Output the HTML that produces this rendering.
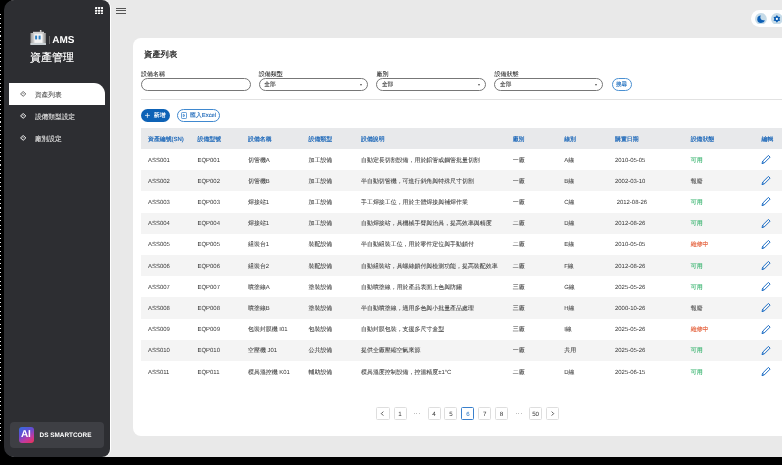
<!DOCTYPE html>
<html><head><meta charset="utf-8">
<style>
*{box-sizing:border-box;margin:0;padding:0}
html,body{width:782px;height:465px;overflow:hidden;background:#000;font-family:"Liberation Sans",sans-serif}
.abs{position:absolute}
#app{position:absolute;left:100px;top:0;width:700px;height:457px;background:#e9e9e9}
#side{position:absolute;left:4px;top:0;width:106px;height:457px;background:#2d2e32;border-radius:10px 8px 8px 10px;box-shadow:1px 0 0 #fff}
.grid{position:absolute;left:95px;top:7px;width:8px;height:8px;display:grid;grid-template-columns:repeat(3,2px);grid-template-rows:repeat(3,2px);gap:1px}
.grid i{background:#fff;display:block}
.ham{position:absolute;left:116px;width:10px;height:1px;background:#555}
#card{position:absolute;left:133px;top:38px;width:700px;height:398px;background:#fff;border-radius:8px}
.t{position:absolute;white-space:nowrap;line-height:1}
.lbl{font-size:6px;color:#2a2a2a;-webkit-text-stroke:0.08px #2a2a2a}
.inp{position:absolute;top:78.2px;height:12.6px;border:1px solid #777;border-radius:7px;background:#fff}
.inp .v{position:absolute;left:4.7px;top:3.8px;font-size:5.7px;color:#333;line-height:1;-webkit-text-stroke:0.1px #333}
.inp .arr{position:absolute;right:5px;top:4.5px;width:0;height:0;border-left:1.5px solid transparent;border-right:1.5px solid transparent;border-top:2px solid #555}
.hdr{position:absolute;left:141px;width:700px;height:21px;background:#e8e9eb}
.alt{position:absolute;left:141px;width:700px;height:21.2px;background:#f4f4f4}
.th{font-size:5.9px;color:#1a66b8;-webkit-text-stroke:0.2px #1a66b8}
.td{font-size:5.95px;color:#333}
.td .c{color:#3a3a3a;-webkit-text-stroke:0.06px #3a3a3a}
.pg{position:absolute;top:406.5px;width:13.2px;height:13.3px;border:1px solid #dedede;border-radius:1.5px;background:#fff;font-size:6.2px;color:#333;text-align:center;line-height:13.2px}
.pg .ch{position:absolute;left:-1px;top:-1px}
.menu{position:absolute;font-size:6.7px;color:#e2e2e2;line-height:1;-webkit-text-stroke:0.1px currentColor}
.dia{position:absolute;width:4.5px;height:4.5px;border:1px solid #fff;transform:rotate(45deg)}
.dia::after{content:"";position:absolute;left:0.75px;top:0.75px;width:1px;height:1px;background:#fff}

svg{display:block}
#root{position:absolute;left:0;top:0;width:782px;height:465px;will-change:transform;overflow:hidden;text-rendering:geometricPrecision}

</style></head><body><div id="root">
<div id="ldots" class="abs" style="left:0;top:14px;width:1px;height:430px;background:repeating-linear-gradient(to bottom,#ddd 0,#ddd 1px,transparent 1px,transparent 4.3px)"></div>
<div id="app"></div>
<div id="side"></div>
<div class="abs" style="left:94.8px;top:6.9px;width:8.2px;height:7.6px"><svg width="8.2" height="7.6" viewBox="0 0 8.2 7.6" fill="#fff"><rect x="0" y="0" width="2.2" height="2" rx="0.4"/><rect x="3" y="0" width="2.2" height="2" rx="0.4"/><rect x="6" y="0" width="2.2" height="2" rx="0.4"/><rect x="0" y="2.8" width="2.2" height="2" rx="0.4"/><rect x="3" y="2.8" width="2.2" height="2" rx="0.4"/><rect x="6" y="2.8" width="2.2" height="2" rx="0.4"/><rect x="0" y="5.6" width="2.2" height="2" rx="0.4"/><rect x="3" y="5.6" width="2.2" height="2" rx="0.4"/><rect x="6" y="5.6" width="2.2" height="2" rx="0.4"/></svg></div>
<div class="ham" style="top:8px"></div><div class="ham" style="top:10.4px"></div><div class="ham" style="top:12.9px"></div>

<!-- brand -->
<div class="abs" style="left:29.5px;top:30px;width:16px;height:16px">
<svg width="16" height="16" viewBox="0 0 16 16"><defs><linearGradient id="rb" x1="0" y1="0" x2="1" y2="0"><stop offset="0" stop-color="#9a9a9a"/><stop offset="0.25" stop-color="#d8d8d8"/><stop offset="0.75" stop-color="#d8d8d8"/><stop offset="1" stop-color="#8a8a8a"/></linearGradient></defs>
<circle cx="10.7" cy="0.9" r="0.9" fill="#e0e0e0"/><rect x="3" y="1.8" width="11" height="1.4" fill="#cfcfcf"/><rect x="0.5" y="3" width="15.4" height="12" fill="url(#rb)"/><rect x="4.5" y="4.2" width="7.9" height="8.6" fill="#f5f5f5"/><rect x="5.1" y="5.6" width="2" height="3.8" fill="#2f7fc0"/><rect x="8.6" y="5.6" width="2" height="3.8" fill="#2f7fc0"/><rect x="0.5" y="13" width="15.4" height="2" fill="#c9d0d4"/></svg></div>
<div class="abs" style="left:49px;top:36px;width:1px;height:8px;background:#666"></div>
<div class="t" style="left:52.3px;top:36px;font-size:10px;font-weight:bold;color:#fff">AMS</div>
<div class="t" style="left:30px;top:52.6px;font-size:11px;color:#fff;-webkit-text-stroke:0.2px #fff">資產管理</div>

<!-- menu -->
<div class="abs" style="left:9px;top:83px;width:96px;height:22px;background:#fff;border-radius:0 11px 0 0"></div>
<div class="abs" style="left:19.8px;top:90.8px;width:6.4px;height:5.8px"><svg width="6.4" height="5.8" viewBox="0 0 12 11" fill="none" stroke="#444" stroke-width="1.5"><path d="M6 1L11 5.5L6 10L1 5.5Z"/><path d="M4.6 5.1H7.4" stroke-width="1.1"/></svg></div>
<div class="menu" style="left:34.9px;top:93px;color:#555">資產列表</div>
<div class="abs" style="left:19.8px;top:112.8px;width:6.4px;height:5.8px"><svg width="6.4" height="5.8" viewBox="0 0 12 11" fill="none" stroke="#fff" stroke-width="1.8"><path d="M6 1L11 5.5L6 10L1 5.5Z"/><path d="M4.6 5.1H7.4" stroke-width="1.1"/></svg></div>
<div class="menu" style="left:34.9px;top:114.9px">設備類型設定</div>
<div class="abs" style="left:19.8px;top:135.2px;width:6.4px;height:5.8px"><svg width="6.4" height="5.8" viewBox="0 0 12 11" fill="none" stroke="#fff" stroke-width="1.8"><path d="M6 1L11 5.5L6 10L1 5.5Z"/><path d="M4.6 5.1H7.4" stroke-width="1.1"/></svg></div>
<div class="menu" style="left:34.9px;top:137px">廠別設定</div>

<!-- bottom brand -->
<div class="abs" style="left:10px;top:422px;width:93.5px;height:26px;background:#3e3f44;border-radius:4px"></div>
<div class="abs" style="left:18.7px;top:427.3px;width:15.3px;height:15.3px;border-radius:3px;background:linear-gradient(150deg,#2f6ee0 0%,#6a4ad0 40%,#c23aa0 70%,#f0304f 100%)"></div>
<div class="t" style="left:21px;top:430.3px;font-size:10px;font-weight:bold;color:#fff;letter-spacing:-0.3px">AI</div>
<div class="t" style="left:39.6px;top:433px;font-size:6.4px;font-weight:bold;color:#fff">DS SMARTCORE</div>

<!-- theme pill -->
<div class="abs" style="left:751.4px;top:10.1px;width:60px;height:17.3px;background:#fff;border-radius:9px"></div>
<div class="abs" style="left:755.2px;top:12.7px;width:11.8px;height:11.8px"><svg width="11.8" height="11.8" viewBox="0 0 24 24"><defs><mask id="mm"><rect width="24" height="24" fill="#fff"/><circle cx="17.2" cy="8.6" r="6.2" fill="#000"/></mask></defs><circle cx="12" cy="12" r="12" fill="#c6dbe8"/><circle cx="12.2" cy="12.6" r="7.6" fill="#0d5fb5" mask="url(#mm)"/></svg></div>
<div class="abs" style="left:770.9px;top:12.7px;width:11.8px;height:11.8px"><svg width="11.8" height="11.8" viewBox="0 0 24 24"><circle cx="12" cy="12" r="12" fill="#c6dbe8"/><path d="M12 4.3L14.6 7.5L18.7 8.1L17.2 12L18.7 15.9L14.6 16.5L12 19.7L9.4 16.5L5.3 15.9L6.8 12L5.3 8.1L9.4 7.5Z" fill="#0d5fb5"/><circle cx="12" cy="12" r="4.6" fill="#0d5fb5"/><circle cx="12" cy="12" r="2.2" fill="#fff"/></svg></div>

<div id="card"></div>
<div class="t" style="left:144px;top:50px;font-size:8.3px;color:#222;-webkit-text-stroke:0.25px #222">資產列表</div>

<div class="t lbl" style="left:141px;top:72.4px">設備名稱</div>
<div class="inp" style="left:141px;width:110px"></div>
<div class="t lbl" style="left:258.7px;top:72.4px">設備類型</div>
<div class="inp" style="left:258.6px;width:109.6px"><span class="v">全部</span><span class="arr"></span></div>
<div class="t lbl" style="left:376.4px;top:72.4px">廠別</div>
<div class="inp" style="left:376.2px;width:110px"><span class="v">全部</span><span class="arr"></span></div>
<div class="t lbl" style="left:494.4px;top:72.4px">設備狀態</div>
<div class="inp" style="left:494.3px;width:109.2px"><span class="v">全部</span><span class="arr"></span></div>
<div class="abs" style="left:611.8px;top:78.2px;width:20.5px;height:12.5px;border:1px solid #4a90d2;border-radius:6.5px"></div>
<div class="t" style="left:616px;top:83px;font-size:5.5px;color:#1f6fbf;-webkit-text-stroke:0.15px #1f6fbf">搜尋</div>
<div class="abs" style="left:141px;top:99px;width:700px;height:1px;background:#e2e2e2"></div>

<!-- buttons -->
<div class="abs" style="left:140.8px;top:109.2px;width:28.8px;height:13px;background:#0d62b6;border-radius:7px"></div>
<div class="abs" style="left:145.2px;top:113.1px;width:4.8px;height:4.8px"><svg width="4.8" height="4.8" viewBox="0 0 10 10"><path d="M5 0v10M0 5h10" stroke="#fff" stroke-width="1.5"/></svg></div>
<div class="t" style="left:153.8px;top:113.8px;font-size:5.9px;color:#fff;-webkit-text-stroke:0.12px #fff">新增</div>
<div class="abs" style="left:177px;top:109.2px;width:43px;height:13px;border:1px solid #3f88cf;border-radius:7px"></div>
<div class="abs" style="left:180.8px;top:112.3px;width:6px;height:7px"><svg width="6" height="7" viewBox="0 0 12 14" fill="none" stroke="#2a78c8" stroke-width="1.4"><rect x="1" y="1" width="10" height="12" rx="1.5"/><path d="M4.5 4.5L8 7L4.5 9.5Z"/></svg></div>
<div class="t" style="left:190px;top:114.2px;font-size:5.9px;color:#1a66b8;-webkit-text-stroke:0.1px #1a66b8">匯入Excel</div>

<div class="hdr" style="top:127.8px"></div>
<div class="t th" style="left:148px;top:138.10px">資產編號(SN)</div>
<div class="t th" style="left:197.5px;top:138.10px">設備型號</div>
<div class="t th" style="left:248px;top:138.10px">設備名稱</div>
<div class="t th" style="left:308.5px;top:138.10px">設備類型</div>
<div class="t th" style="left:361px;top:138.10px">設備說明</div>
<div class="t th" style="left:512.7px;top:138.10px">廠別</div>
<div class="t th" style="left:564.2px;top:138.10px">線別</div>
<div class="t th" style="left:615px;top:138.10px">購置日期</div>
<div class="t th" style="left:690.7px;top:138.10px">設備狀態</div>
<div class="t th" style="left:761.6px;top:138.10px">編輯</div>
<div class="t td" style="left:148px;top:158.60px">ASS001</div>
<div class="t td" style="left:197.5px;top:158.60px">EQP001</div>
<div class="t td" style="left:248px;top:158.60px"><span class="c">切管機</span>A</div>
<div class="t td" style="left:308.5px;top:158.60px"><span class="c">加工設備</span></div>
<div class="t td" style="left:361px;top:158.60px"><span class="c">自動定長切割設備，用於鋁管或鋼管批量切割</span></div>
<div class="t td" style="left:512.7px;top:158.60px"><span class="c">一廠</span></div>
<div class="t td" style="left:564.2px;top:158.60px">A<span class="c">線</span></div>
<div class="t td" style="left:615px;top:158.60px">2010-05-05</div>
<div class="t td" style="left:690.7px;top:158.60px;color:#2fb068;-webkit-text-stroke:0.12px #2fb068">可用</div>
<div class="abs" style="left:756px;top:150.00px;width:20px;height:20px"><svg width="20" height="20" viewBox="0 0 20 20" fill="none" stroke="#1f6fc6" stroke-width="1" stroke-linejoin="round"><path d="M6 13.7L6.6 11.2L12.4 5.4L14.1 7.1L8.3 12.9Z"/><path d="M6.6 11.2L8.3 12.9"/></svg></div>
<div class="alt" style="top:170.20px"></div>
<div class="t td" style="left:148px;top:179.80px">ASS002</div>
<div class="t td" style="left:197.5px;top:179.80px">EQP002</div>
<div class="t td" style="left:248px;top:179.80px"><span class="c">切管機</span>B</div>
<div class="t td" style="left:308.5px;top:179.80px"><span class="c">加工設備</span></div>
<div class="t td" style="left:361px;top:179.80px"><span class="c">半自動切管機，可進行斜角與特殊尺寸切割</span></div>
<div class="t td" style="left:512.7px;top:179.80px"><span class="c">一廠</span></div>
<div class="t td" style="left:564.2px;top:179.80px">B<span class="c">線</span></div>
<div class="t td" style="left:615px;top:179.80px">2002-03-10</div>
<div class="t td" style="left:690.7px;top:179.80px;color:#555;-webkit-text-stroke:0.12px #555">報廢</div>
<div class="abs" style="left:756px;top:171.20px;width:20px;height:20px"><svg width="20" height="20" viewBox="0 0 20 20" fill="none" stroke="#1f6fc6" stroke-width="1" stroke-linejoin="round"><path d="M6 13.7L6.6 11.2L12.4 5.4L14.1 7.1L8.3 12.9Z"/><path d="M6.6 11.2L8.3 12.9"/></svg></div>
<div class="t td" style="left:148px;top:201.00px">ASS003</div>
<div class="t td" style="left:197.5px;top:201.00px">EQP003</div>
<div class="t td" style="left:248px;top:201.00px"><span class="c">焊接站</span>1</div>
<div class="t td" style="left:308.5px;top:201.00px"><span class="c">加工設備</span></div>
<div class="t td" style="left:361px;top:201.00px"><span class="c">手工焊接工位，用於主體焊接與補焊作業</span></div>
<div class="t td" style="left:512.7px;top:201.00px"><span class="c">一廠</span></div>
<div class="t td" style="left:564.2px;top:201.00px">C<span class="c">線</span></div>
<div class="t td" style="left:615px;top:201.00px">&nbsp;2012-08-26</div>
<div class="t td" style="left:690.7px;top:201.00px;color:#2fb068;-webkit-text-stroke:0.12px #2fb068">可用</div>
<div class="abs" style="left:756px;top:192.40px;width:20px;height:20px"><svg width="20" height="20" viewBox="0 0 20 20" fill="none" stroke="#1f6fc6" stroke-width="1" stroke-linejoin="round"><path d="M6 13.7L6.6 11.2L12.4 5.4L14.1 7.1L8.3 12.9Z"/><path d="M6.6 11.2L8.3 12.9"/></svg></div>
<div class="alt" style="top:212.60px"></div>
<div class="t td" style="left:148px;top:222.20px">ASS004</div>
<div class="t td" style="left:197.5px;top:222.20px">EQP004</div>
<div class="t td" style="left:248px;top:222.20px"><span class="c">焊接站</span>1</div>
<div class="t td" style="left:308.5px;top:222.20px"><span class="c">加工設備</span></div>
<div class="t td" style="left:361px;top:222.20px"><span class="c">自動焊接站，具機械手臂與治具，提高效率與精度</span></div>
<div class="t td" style="left:512.7px;top:222.20px"><span class="c">二廠</span></div>
<div class="t td" style="left:564.2px;top:222.20px">D<span class="c">線</span></div>
<div class="t td" style="left:615px;top:222.20px">2012-08-26</div>
<div class="t td" style="left:690.7px;top:222.20px;color:#2fb068;-webkit-text-stroke:0.12px #2fb068">可用</div>
<div class="abs" style="left:756px;top:213.60px;width:20px;height:20px"><svg width="20" height="20" viewBox="0 0 20 20" fill="none" stroke="#1f6fc6" stroke-width="1" stroke-linejoin="round"><path d="M6 13.7L6.6 11.2L12.4 5.4L14.1 7.1L8.3 12.9Z"/><path d="M6.6 11.2L8.3 12.9"/></svg></div>
<div class="t td" style="left:148px;top:243.40px">ASS005</div>
<div class="t td" style="left:197.5px;top:243.40px">EQP005</div>
<div class="t td" style="left:248px;top:243.40px"><span class="c">組裝台</span>1</div>
<div class="t td" style="left:308.5px;top:243.40px"><span class="c">裝配設備</span></div>
<div class="t td" style="left:361px;top:243.40px"><span class="c">半自動組裝工位，用於零件定位與手動鎖付</span></div>
<div class="t td" style="left:512.7px;top:243.40px"><span class="c">二廠</span></div>
<div class="t td" style="left:564.2px;top:243.40px">E<span class="c">線</span></div>
<div class="t td" style="left:615px;top:243.40px">2010-05-05</div>
<div class="t td" style="left:690.7px;top:243.40px;color:#e4603b;-webkit-text-stroke:0.12px #e4603b">維修中</div>
<div class="abs" style="left:756px;top:234.80px;width:20px;height:20px"><svg width="20" height="20" viewBox="0 0 20 20" fill="none" stroke="#1f6fc6" stroke-width="1" stroke-linejoin="round"><path d="M6 13.7L6.6 11.2L12.4 5.4L14.1 7.1L8.3 12.9Z"/><path d="M6.6 11.2L8.3 12.9"/></svg></div>
<div class="alt" style="top:255.00px"></div>
<div class="t td" style="left:148px;top:264.60px">ASS006</div>
<div class="t td" style="left:197.5px;top:264.60px">EQP006</div>
<div class="t td" style="left:248px;top:264.60px"><span class="c">組裝台</span>2</div>
<div class="t td" style="left:308.5px;top:264.60px"><span class="c">裝配設備</span></div>
<div class="t td" style="left:361px;top:264.60px"><span class="c">自動組裝站，具螺絲鎖付與檢測功能，提高裝配效率</span></div>
<div class="t td" style="left:512.7px;top:264.60px"><span class="c">二廠</span></div>
<div class="t td" style="left:564.2px;top:264.60px">F<span class="c">線</span></div>
<div class="t td" style="left:615px;top:264.60px">2012-08-26</div>
<div class="t td" style="left:690.7px;top:264.60px;color:#2fb068;-webkit-text-stroke:0.12px #2fb068">可用</div>
<div class="abs" style="left:756px;top:256.00px;width:20px;height:20px"><svg width="20" height="20" viewBox="0 0 20 20" fill="none" stroke="#1f6fc6" stroke-width="1" stroke-linejoin="round"><path d="M6 13.7L6.6 11.2L12.4 5.4L14.1 7.1L8.3 12.9Z"/><path d="M6.6 11.2L8.3 12.9"/></svg></div>
<div class="t td" style="left:148px;top:285.80px">ASS007</div>
<div class="t td" style="left:197.5px;top:285.80px">EQP007</div>
<div class="t td" style="left:248px;top:285.80px"><span class="c">噴塗線</span>A</div>
<div class="t td" style="left:308.5px;top:285.80px"><span class="c">塗裝設備</span></div>
<div class="t td" style="left:361px;top:285.80px"><span class="c">自動噴塗線，用於產品表面上色與防鏽</span></div>
<div class="t td" style="left:512.7px;top:285.80px"><span class="c">三廠</span></div>
<div class="t td" style="left:564.2px;top:285.80px">G<span class="c">線</span></div>
<div class="t td" style="left:615px;top:285.80px">2025-05-26</div>
<div class="t td" style="left:690.7px;top:285.80px;color:#2fb068;-webkit-text-stroke:0.12px #2fb068">可用</div>
<div class="abs" style="left:756px;top:277.20px;width:20px;height:20px"><svg width="20" height="20" viewBox="0 0 20 20" fill="none" stroke="#1f6fc6" stroke-width="1" stroke-linejoin="round"><path d="M6 13.7L6.6 11.2L12.4 5.4L14.1 7.1L8.3 12.9Z"/><path d="M6.6 11.2L8.3 12.9"/></svg></div>
<div class="alt" style="top:297.40px"></div>
<div class="t td" style="left:148px;top:307.00px">ASS008</div>
<div class="t td" style="left:197.5px;top:307.00px">EQP008</div>
<div class="t td" style="left:248px;top:307.00px"><span class="c">噴塗線</span>B</div>
<div class="t td" style="left:308.5px;top:307.00px"><span class="c">塗裝設備</span></div>
<div class="t td" style="left:361px;top:307.00px"><span class="c">半自動噴塗線，適用多色與小批量產品處理</span></div>
<div class="t td" style="left:512.7px;top:307.00px"><span class="c">三廠</span></div>
<div class="t td" style="left:564.2px;top:307.00px">H<span class="c">線</span></div>
<div class="t td" style="left:615px;top:307.00px">2000-10-26</div>
<div class="t td" style="left:690.7px;top:307.00px;color:#555;-webkit-text-stroke:0.12px #555">報廢</div>
<div class="abs" style="left:756px;top:298.40px;width:20px;height:20px"><svg width="20" height="20" viewBox="0 0 20 20" fill="none" stroke="#1f6fc6" stroke-width="1" stroke-linejoin="round"><path d="M6 13.7L6.6 11.2L12.4 5.4L14.1 7.1L8.3 12.9Z"/><path d="M6.6 11.2L8.3 12.9"/></svg></div>
<div class="t td" style="left:148px;top:328.20px">ASS009</div>
<div class="t td" style="left:197.5px;top:328.20px">EQP009</div>
<div class="t td" style="left:248px;top:328.20px"><span class="c">包裝封膜機</span> I01</div>
<div class="t td" style="left:308.5px;top:328.20px"><span class="c">包裝設備</span></div>
<div class="t td" style="left:361px;top:328.20px"><span class="c">自動封膜包裝，支援多尺寸盒型</span></div>
<div class="t td" style="left:512.7px;top:328.20px"><span class="c">三廠</span></div>
<div class="t td" style="left:564.2px;top:328.20px">I<span class="c">線</span></div>
<div class="t td" style="left:615px;top:328.20px">2025-05-26</div>
<div class="t td" style="left:690.7px;top:328.20px;color:#e4603b;-webkit-text-stroke:0.12px #e4603b">維修中</div>
<div class="abs" style="left:756px;top:319.60px;width:20px;height:20px"><svg width="20" height="20" viewBox="0 0 20 20" fill="none" stroke="#1f6fc6" stroke-width="1" stroke-linejoin="round"><path d="M6 13.7L6.6 11.2L12.4 5.4L14.1 7.1L8.3 12.9Z"/><path d="M6.6 11.2L8.3 12.9"/></svg></div>
<div class="alt" style="top:339.80px"></div>
<div class="t td" style="left:148px;top:349.40px">ASS010</div>
<div class="t td" style="left:197.5px;top:349.40px">EQP010</div>
<div class="t td" style="left:248px;top:349.40px"><span class="c">空壓機</span> J01</div>
<div class="t td" style="left:308.5px;top:349.40px"><span class="c">公共設備</span></div>
<div class="t td" style="left:361px;top:349.40px"><span class="c">提供全廠壓縮空氣來源</span></div>
<div class="t td" style="left:512.7px;top:349.40px"><span class="c">一廠</span></div>
<div class="t td" style="left:564.2px;top:349.40px"><span class="c">共用</span></div>
<div class="t td" style="left:615px;top:349.40px">2025-05-26</div>
<div class="t td" style="left:690.7px;top:349.40px;color:#2fb068;-webkit-text-stroke:0.12px #2fb068">可用</div>
<div class="abs" style="left:756px;top:340.80px;width:20px;height:20px"><svg width="20" height="20" viewBox="0 0 20 20" fill="none" stroke="#1f6fc6" stroke-width="1" stroke-linejoin="round"><path d="M6 13.7L6.6 11.2L12.4 5.4L14.1 7.1L8.3 12.9Z"/><path d="M6.6 11.2L8.3 12.9"/></svg></div>
<div class="t td" style="left:148px;top:370.60px">ASS011</div>
<div class="t td" style="left:197.5px;top:370.60px">EQP011</div>
<div class="t td" style="left:248px;top:370.60px"><span class="c">模具溫控機</span> K01</div>
<div class="t td" style="left:308.5px;top:370.60px"><span class="c">輔助設備</span></div>
<div class="t td" style="left:361px;top:370.60px"><span class="c">模具溫度控制設備，控溫精度</span>±1°C</div>
<div class="t td" style="left:512.7px;top:370.60px"><span class="c">二廠</span></div>
<div class="t td" style="left:564.2px;top:370.60px">D<span class="c">線</span></div>
<div class="t td" style="left:615px;top:370.60px">2025-06-15</div>
<div class="t td" style="left:690.7px;top:370.60px;color:#2fb068;-webkit-text-stroke:0.12px #2fb068">可用</div>
<div class="abs" style="left:756px;top:362.00px;width:20px;height:20px"><svg width="20" height="20" viewBox="0 0 20 20" fill="none" stroke="#1f6fc6" stroke-width="1" stroke-linejoin="round"><path d="M6 13.7L6.6 11.2L12.4 5.4L14.1 7.1L8.3 12.9Z"/><path d="M6.6 11.2L8.3 12.9"/></svg></div>

<!-- pagination -->
<div class="pg" style="left:376.4px"><span class="ch"><svg width="13" height="13" viewBox="0 0 13 13"><path d="M7.3 4.6L5.3 6.6L7.3 8.6" fill="none" stroke="#444" stroke-width="0.9"/></svg></span></div>
<div class="pg" style="left:393.5px">1</div>
<div class="abs" style="left:413.60px;top:412.6px;width:0.9px;height:0.9px;border-radius:50%;background:#999"></div><div class="abs" style="left:416.40px;top:412.6px;width:0.9px;height:0.9px;border-radius:50%;background:#999"></div><div class="abs" style="left:419.20px;top:412.6px;width:0.9px;height:0.9px;border-radius:50%;background:#999"></div>
<div class="pg" style="left:427.5px">4</div>
<div class="pg" style="left:444.3px">5</div>
<div class="pg" style="left:461.3px;border-color:#3a80cc;color:#1f6fbf">6</div>
<div class="pg" style="left:478.2px">7</div>
<div class="pg" style="left:495px">8</div>
<div class="abs" style="left:515.60px;top:412.6px;width:0.9px;height:0.9px;border-radius:50%;background:#999"></div><div class="abs" style="left:518.40px;top:412.6px;width:0.9px;height:0.9px;border-radius:50%;background:#999"></div><div class="abs" style="left:521.20px;top:412.6px;width:0.9px;height:0.9px;border-radius:50%;background:#999"></div>
<div class="pg" style="left:529px">50</div>
<div class="pg" style="left:546px"><span class="ch"><svg width="13" height="13" viewBox="0 0 13 13"><path d="M5.7 4.6L7.7 6.6L5.7 8.6" fill="none" stroke="#444" stroke-width="0.9"/></svg></span></div>

</div></body></html>
